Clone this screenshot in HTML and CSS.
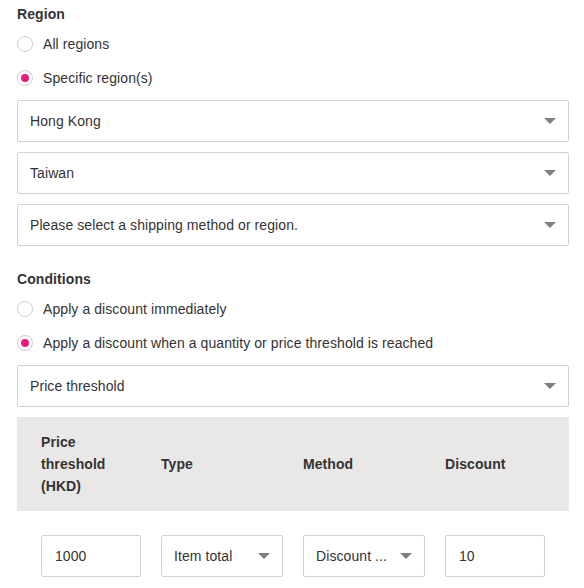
FILE: index.html
```html
<!DOCTYPE html>
<html lang="en">
<head>
<meta charset="utf-8">
<title>Discount settings</title>
<link rel="stylesheet" href="styles.css">
</head>
<body>
<div class="page">
  <section class="section section-region">
    <h3 class="heading">Region</h3>
    <div class="radios">
      <label class="radio"><span class="dot"></span><span>All regions</span></label>
      <label class="radio checked"><span class="dot"></span><span>Specific region(s)</span></label>
    </div>
    <div class="selects">
      <div class="select"><span class="value">Hong Kong</span><span class="caret"></span></div>
      <div class="select"><span class="value">Taiwan</span><span class="caret"></span></div>
      <div class="select"><span class="value">Please select a shipping method or region.</span><span class="caret"></span></div>
    </div>
  </section>

  <section class="section section-conditions">
    <h3 class="heading">Conditions</h3>
    <div class="radios">
      <label class="radio"><span class="dot"></span><span>Apply a discount immediately</span></label>
      <label class="radio checked"><span class="dot"></span><span>Apply a discount when a quantity or price threshold is reached</span></label>
    </div>
    <div class="selects">
      <div class="select"><span class="value">Price threshold</span><span class="caret"></span></div>
    </div>

    <div class="table">
      <div class="thead grid">
        <div class="th">Price<br>threshold<br>(HKD)</div>
        <div class="th">Type</div>
        <div class="th">Method</div>
        <div class="th">Discount</div>
      </div>
      <div class="trow grid">
        <div class="input">1000</div>
        <div class="select small"><span class="value">Item total</span><span class="caret"></span></div>
        <div class="select small"><span class="value">Discount ...</span><span class="caret"></span></div>
        <div class="input">10</div>
      </div>
    </div>
  </section>
</div>
</body>
</html>
```

FILE: styles.css
```css
* { box-sizing: border-box; }

html, body {
  margin: 0;
  padding: 0;
  background: #ffffff;
}

body {
  font-family: "Liberation Sans", Arial, sans-serif;
  font-size: 14px;
  letter-spacing: 0.08px;
  color: #333333;
}

.page {
  width: 552px;
  margin-left: 17px;
}

.section-region { padding-top: 4px; }
.section-conditions { padding-top: 23px; }

.heading {
  margin: 0;
  font-size: 14px;
  line-height: 20px;
  font-weight: bold;
  color: #333333;
}

.radios {
  margin-top: 3px;
  display: flex;
  flex-direction: column;
}

.radio {
  height: 34px;
  display: flex;
  align-items: center;
  gap: 10px;
  line-height: 20px;
}

.dot {
  width: 16px;
  height: 16px;
  border: 1px solid #cfcfcf;
  border-radius: 50%;
  display: flex;
  align-items: center;
  justify-content: center;
  flex: none;
}

.radio.checked .dot::after {
  content: "";
  width: 8px;
  height: 8px;
  border-radius: 50%;
  background: #f2187e;
}

.selects {
  margin-top: 5px;
  display: flex;
  flex-direction: column;
  gap: 10px;
}

.select {
  height: 42px;
  border: 1px solid #d2d2d2;
  border-radius: 2px;
  padding: 0 12px;
  display: flex;
  align-items: center;
  justify-content: space-between;
  gap: 6px;
  background: #fff;
}

.select .value {
  white-space: nowrap;
  min-width: 0;
}

.caret {
  flex: none;
  width: 0;
  height: 0;
  border-left: 6px solid transparent;
  border-right: 6px solid transparent;
  border-top: 6px solid #7b8282;
}

.table {
  margin-top: 10px;
}

.grid {
  display: grid;
  grid-template-columns: 100px 122px 122px 100px;
  column-gap: 20px;
  padding: 0 24px;
}

.thead {
  background: #e9e8e6;
  padding-top: 14px;
  padding-bottom: 14px;
  align-items: center;
}

.th {
  font-weight: bold;
  line-height: 22px;
}

.trow {
  margin-top: 24px;
}

.input {
  height: 42px;
  border: 1px solid #d2d2d2;
  border-radius: 2px;
  padding: 0 13px;
  display: flex;
  align-items: center;
}
```
